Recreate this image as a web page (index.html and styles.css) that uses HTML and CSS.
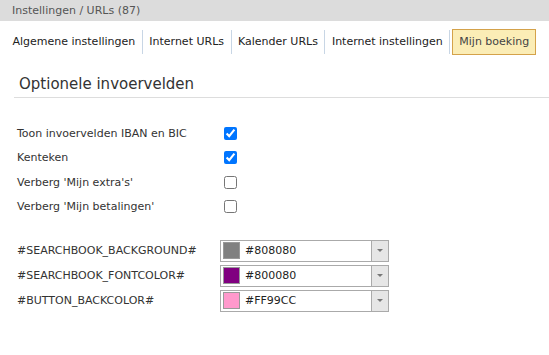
FILE: index.html
```html
<!DOCTYPE html>
<html lang="nl">
<head>
  <meta charset="UTF-8" />
  <title>Instellingen / URLs</title>
  <link rel="stylesheet" href="styles.css">
</head>
<body>
  <div class="topbar">Instellingen / URLs (87)</div>

  <div class="tabs">
    <span class="tab">Algemene instellingen</span>
    <span class="tab">Internet URLs</span>
    <span class="tab">Kalender URLs</span>
    <span class="tab">Internet instellingen</span>
    <span class="tab active">Mijn boeking</span>
  </div>

  <div class="panel">
    <h2 class="panel-title">Optionele invoervelden</h2>

    <div class="fields">
      <div class="row"><label>Toon invoervelden IBAN en BIC</label><input type="checkbox" checked></div>
      <div class="row"><label>Kenteken</label><input type="checkbox" checked></div>
      <div class="row"><label>Verberg 'Mijn extra's'</label><input type="checkbox"></div>
      <div class="row"><label>Verberg 'Mijn betalingen'</label><input type="checkbox"></div>
    </div>

    <div class="fields colors">
      <div class="row">
        <label>#SEARCHBOOK_BACKGROUND#</label>
        <div class="colorpick">
          <span class="swatch" style="background-color: #808080;"></span>
          <span class="value">#808080</span>
          <span class="drop"><span class="arrow"></span></span>
        </div>
      </div>
      <div class="row">
        <label>#SEARCHBOOK_FONTCOLOR#</label>
        <div class="colorpick">
          <span class="swatch" style="background-color: #800080;"></span>
          <span class="value">#800080</span>
          <span class="drop"><span class="arrow"></span></span>
        </div>
      </div>
      <div class="row">
        <label>#BUTTON_BACKCOLOR#</label>
        <div class="colorpick">
          <span class="swatch" style="background-color: #FF99CC;"></span>
          <span class="value">#FF99CC</span>
          <span class="drop"><span class="arrow"></span></span>
        </div>
      </div>
    </div>
  </div>
</body>
</html>
```

FILE: styles.css
```css
body {
  margin: 0;
  font-family: "DejaVu Sans", Verdana, sans-serif;
  font-size: 11px;
  color: #333;
  background: #fff;
}
.topbar {
  background-color: #dcdcdc;
  color: #555;
  height: 21px;
  line-height: 21px;
  padding-left: 12px;
}
.tabs {
  display: flex;
  align-items: center;
  padding: 8px 0 0 6px;
}
.tab {
  padding: 0 6.5px;
  line-height: 24px;
  border-right: 1px solid #c8d6e5;
  color: #222;
}
.tab.active {
  border: 1px solid #d4a24a;
  background-color: #fbedb6;
  color: #444;
  margin-left: 2px;
  padding: 0 6px;
}
.panel {
  margin-left: 14px;
}
.panel-title {
  font-size: 15px;
  font-weight: normal;
  color: #333;
  margin: 20px 0 0;
  padding: 0 0 4px 5px;
  border-bottom: 1px solid #ddd;
}
.fields {
  margin-top: 23px;
  margin-left: 3px;
}
.row {
  display: flex;
  align-items: center;
  height: 24.5px;
}
.row label {
  width: 206px;
}
.row input[type="checkbox"] {
  width: 13px;
  height: 13px;
  margin: 0 0 0 1px;
  accent-color: #0075ff;
}
.colors {
  margin-top: 19px;
}
.colors .row {
  height: 25px;
}
.colors .row label {
  width: 203px;
}
.colorpick {
  display: flex;
  align-items: center;
  width: 167px;
  height: 20px;
  border: 1px solid #aaa;
  background: #fff;
}
.swatch {
  width: 15px;
  height: 15px;
  margin-left: 2px;
  border: 1px solid #999;
}
.value {
  flex: 1;
  margin-left: 5px;
  color: #222;
}
.drop {
  width: 16px;
  height: 20px;
  border-left: 1px solid #aaa;
  background-color: #e6e6e6;
  display: flex;
  align-items: center;
  justify-content: center;
}
.arrow {
  width: 0;
  height: 0;
  border-left: 3px solid transparent;
  border-right: 3px solid transparent;
  border-top: 3px solid #777;
}
```
